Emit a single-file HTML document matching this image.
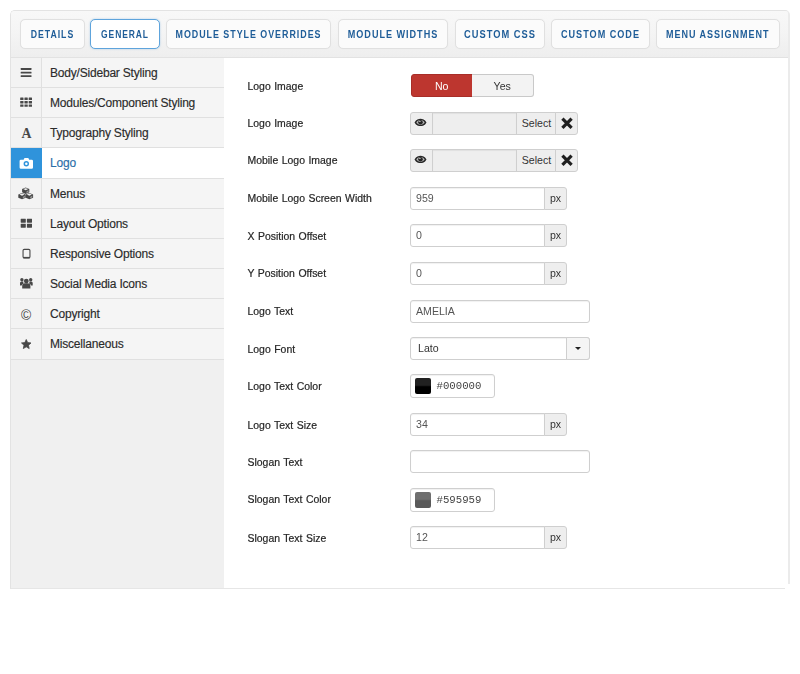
<!DOCTYPE html>
<html lang="en">
<head>
<meta charset="utf-8">
<title>Template Settings</title>
<style>
*{box-sizing:border-box;}
html,body{margin:0;padding:0;background:#fff;}
body{width:800px;height:674px;overflow:hidden;font-family:"Liberation Sans",sans-serif;font-size:12px;color:#333;position:relative;}
.panel{position:absolute;left:10px;top:10px;width:780px;height:579px;border:1px solid #e3e3e3;border-right:2px solid #ebebeb;border-bottom-color:#e6e6e6;border-radius:5px 5px 0 0;background:#fff;overflow:hidden;filter:blur(0.4px);}
.tabs{position:absolute;left:0;top:0;width:778px;height:47px;background:#f4f4f4;background-image:linear-gradient(to bottom,#f8f8f8 0,#f5f5f5 40%,#eeeeee 100%);border-bottom:1px solid #e2e2e2;margin:0;padding:0;list-style:none;}
.tabs li{position:absolute;top:8px;height:30px;border:1px solid #e0e0e0;box-shadow:0 0 1px rgba(0,0,0,.06);border-radius:5px;background:#fbfbfb;color:#1f5d98;font-weight:bold;font-size:11px;text-align:center;line-height:28px;white-space:nowrap;}
.tabs li span{display:block;letter-spacing:1.2px;transform:scaleX(0.795);transform-origin:50% 50%;margin:0 -30px;}
.tabs li.active{border-color:#5ea4dc;background:#fff;box-shadow:0 0 2px rgba(94,164,220,.5);}
.side{position:absolute;left:0;top:47px;width:213px;height:531px;background:#f0f0f0;margin:0;padding:0;list-style:none;}
.side li{position:relative;height:30.16px;border-bottom:1px solid #e0e0e0;background:#f5f5f5;line-height:30px;font-size:12px;letter-spacing:-0.2px;color:#2b2b2b;-webkit-text-stroke:0.15px currentColor;padding-left:39px;white-space:nowrap;}
.side li .ic{position:absolute;left:0;top:0;width:31px;height:100%;border-right:1px solid #e0e0e0;background:#f3f3f3;display:block;}
.side li .ic svg{position:absolute;left:0;top:-0.7px;width:31px;height:30px;}
.side li.active{background:#fff;color:#2b6fa8;}
.side li.active .ic{background:#2f93db;border-right-color:#2f93db;}
.content{position:absolute;left:213px;top:47px;width:565px;height:531px;background:#fff;}
.row{position:absolute;left:23px;height:23px;width:500px;}
.row label{position:absolute;left:0.5px;top:0;line-height:23.5px;font-size:10.45px;word-spacing:0.6px;color:#262626;-webkit-text-stroke:0.2px #262626;}
.ctl{position:absolute;left:163px;top:0;height:23px;}
.inp{position:absolute;left:0;top:0;height:23px;border:1px solid #cfcfcf;border-radius:3px;background:#fff;font-size:10.6px;color:#555;line-height:21px;padding-left:5px;box-shadow:inset 0 1px 1px rgba(0,0,0,.06);white-space:nowrap;}
.inp.dis{background:#eee;}
.addon{position:absolute;top:0;height:23px;padding-left:1px;border:1px solid #cfcfcf;background:#eee;font-size:10.6px;color:#333;line-height:21px;text-align:center;}
.addon svg{position:absolute;left:-1px;top:-0.6px;width:23px;height:22px;}
.tog{position:absolute;top:0;height:23px;font-size:10.6px;line-height:22px;text-align:center;}
.tog.no{left:1px;width:61.5px;background:#bd362f;color:#fff;border:1px solid #a82e28;border-radius:3px 0 0 3px;}
.tog.yes{left:62px;width:61.5px;background:#f3f3f3;color:#333;border:1px solid #c9c9c9;border-left:0;border-radius:0 3px 3px 0;}
.sw{position:absolute;left:3.5px;top:2.8px;width:16.5px;height:16.5px;border-radius:2px;display:block;background-image:linear-gradient(to bottom,rgba(255,255,255,.13) 0,rgba(255,255,255,.13) 45%,rgba(255,255,255,0) 55%);}
.caret{position:absolute;left:8px;top:9px;width:0;height:0;border-left:3.5px solid transparent;border-right:3.5px solid transparent;border-top:3.5px solid #222;}
</style>
</head>
<body>
<div class="panel">
  <ul class="tabs">
    <li style="left:9px;width:65px;"><span style="transform:scaleX(0.793)">DETAILS</span></li>
    <li class="active" style="left:79px;width:70px;"><span style="transform:scaleX(0.771)">GENERAL</span></li>
    <li style="left:155px;width:165px;"><span style="transform:scaleX(0.809)">MODULE STYLE OVERRIDES</span></li>
    <li style="left:327px;width:110px;"><span style="transform:scaleX(0.825)">MODULE WIDTHS</span></li>
    <li style="left:444px;width:90px;"><span style="transform:scaleX(0.846)">CUSTOM CSS</span></li>
    <li style="left:540px;width:99px;"><span style="transform:scaleX(0.827)">CUSTOM CODE</span></li>
    <li style="left:645px;width:123.500px;"><span style="transform:scaleX(0.819)">MENU ASSIGNMENT</span></li>
  </ul>
  <ul class="side">
    <li><span class="ic"><svg viewBox="0 0 31 30" aria-hidden="true"><rect x="9.7" y="11.1" width="10.8" height="1.9" rx="0.4" fill="#484848"/><rect x="9.7" y="14.7" width="10.8" height="1.9" rx="0.4" fill="#484848"/><rect x="9.7" y="18.2" width="10.8" height="1.9" rx="0.4" fill="#484848"/></svg></span>Body/Sidebar Styling</li>
    <li><span class="ic"><svg viewBox="0 0 31 30" aria-hidden="true"><rect x="9.20" y="10.60" width="3.3" height="2.4" rx="0.3" fill="#484848"/><rect x="13.45" y="10.60" width="3.3" height="2.4" rx="0.3" fill="#484848"/><rect x="17.70" y="10.60" width="3.3" height="2.4" rx="0.3" fill="#484848"/><rect x="9.20" y="14.00" width="3.3" height="2.4" rx="0.3" fill="#484848"/><rect x="13.45" y="14.00" width="3.3" height="2.4" rx="0.3" fill="#484848"/><rect x="17.70" y="14.00" width="3.3" height="2.4" rx="0.3" fill="#484848"/><rect x="9.20" y="17.40" width="3.3" height="2.4" rx="0.3" fill="#484848"/><rect x="13.45" y="17.40" width="3.3" height="2.4" rx="0.3" fill="#484848"/><rect x="17.70" y="17.40" width="3.3" height="2.4" rx="0.3" fill="#484848"/></svg></span>Modules/Component Styling</li>
    <li><span class="ic"><svg viewBox="0 0 31 30" aria-hidden="true"><text x="15.3" y="20.4" text-anchor="middle" font-family="Liberation Serif, serif" font-weight="bold" font-size="13.8" fill="#484848">A</text></svg></span>Typography Styling</li>
    <li class="active"><span class="ic"><svg viewBox="0 0 31 30" aria-hidden="true"><path d="M12.6 11.7l0.900-1.600h3.800l0.900 1.600h2.500a1.300 1.300 0 0 1 1.300 1.300v6.400a1.300 1.300 0 0 1-1.300 1.300h-10.800a1.300 1.300 0 0 1-1.300-1.300v-6.400a1.300 1.300 0 0 1 1.300-1.300z" fill="#fff"/><circle cx="15.3" cy="15.800" r="2.700" fill="#2f93db"/><circle cx="15.300" cy="15.800" r="1.250" fill="#fff"/></svg></span>Logo</li>
    <li><span class="ic"><svg viewBox="0 0 31 30" aria-hidden="true"><polygon points="14.70,9.50 18.30,11.10 18.30,14.30 14.70,15.90 11.10,14.30 11.10,11.10" fill="#484848"/><polygon points="14.70,10.13 17.13,11.10 14.70,12.35 12.27,11.10" fill="#f0f0f0"/><polygon points="15.50,13.60 17.50,12.10 17.50,14.00 15.50,14.90" fill="#9a9a9a"/><polygon points="11.00,14.90 14.70,16.50 14.70,19.70 11.00,21.30 7.30,19.70 7.30,16.50" fill="#484848"/><polygon points="11.00,15.53 13.53,16.50 11.00,17.75 8.47,16.50" fill="#f0f0f0"/><polygon points="11.80,19.00 13.90,17.50 13.90,19.40 11.80,20.30" fill="#9a9a9a"/><polygon points="18.40,14.90 22.10,16.50 22.10,19.70 18.40,21.30 14.70,19.70 14.70,16.50" fill="#484848"/><polygon points="18.40,15.53 20.93,16.50 18.40,17.75 15.87,16.50" fill="#f0f0f0"/><polygon points="19.20,19.00 21.30,17.50 21.30,19.40 19.20,20.30" fill="#9a9a9a"/></svg></span>Menus</li>
    <li><span class="ic"><svg viewBox="0 0 31 30" aria-hidden="true"><rect x="9.70" y="10.70" width="5.1" height="4" rx="0.4" fill="#484848"/><rect x="15.90" y="10.70" width="5.1" height="4" rx="0.4" fill="#484848"/><rect x="9.70" y="15.70" width="5.1" height="4" rx="0.4" fill="#484848"/><rect x="15.90" y="15.70" width="5.1" height="4" rx="0.4" fill="#484848"/></svg></span>Layout Options</li>
    <li><span class="ic"><svg viewBox="0 0 31 30" aria-hidden="true"><rect x="12.050" y="11.350" width="6.900" height="8.700" rx="1.200" fill="none" stroke="#484848" stroke-width="1.100"/><rect x="12.050" y="18.900" width="6.900" height="1.400" fill="#484848"/></svg></span>Responsive Options</li>
    <li><span class="ic"><svg viewBox="0 0 31 30" aria-hidden="true"><circle cx="15.3" cy="13.1" r="2.400" fill="#484848"/><path d="M11.2 20.6v-2.600a2.700 2.700 0 0 1 2.700-2.700h2.800a2.700 2.700 0 0 1 2.700 2.700v2.600z" fill="#484848"/><circle cx="10.900" cy="11.700" r="1.700" fill="#484848"/><circle cx="19.700" cy="11.700" r="1.700" fill="#484848"/><path d="M9 17.500v-2.400a1.500 1.500 0 0 1 1.500-1.500h1.800a3.500 3.500 0 0 0 0.300 2a3.300 3.300 0 0 0-2 1.900z" fill="#484848"/><path d="M21.700 17.500v-2.400a1.500 1.500 0 0 0-1.500-1.500h-1.800a3.500 3.500 0 0 1-0.300 2a3.300 3.300 0 0 1 2 1.900z" fill="#484848"/></svg></span>Social Media Icons</li>
    <li><span class="ic"><svg viewBox="0 0 31 30" aria-hidden="true"><text x="15.100" y="20.800" text-anchor="middle" font-family="Liberation Sans, sans-serif" font-size="13.8" fill="#444">©</text></svg></span>Copyright</li>
    <li><span class="ic"><svg viewBox="0 0 31 30" aria-hidden="true"><polygon points="15.25,10.50 16.63,13.60 20.01,13.95 17.48,16.23 18.19,19.55 15.25,17.85 12.31,19.55 13.02,16.23 10.49,13.95 13.87,13.60" fill="#484848" stroke="#484848" stroke-width="0.800" stroke-linejoin="round"/></svg></span>Miscellaneous</li>
  </ul>
  <div class="content">
    <div class="row" style="top:16px;"><label style="top:1px;">Logo Image</label><div class="ctl"><span class="tog no">No</span><span class="tog yes">Yes</span></div></div>
    <div class="row" style="top:54px;"><label>Logo Image</label><div class="ctl"><span class="addon" style="left:0;width:23px;border-radius:3px 0 0 3px;"><svg class="eye" viewBox="0 0 23 22" aria-hidden="true"><path d="M4.500 10.400C6.300 7.300 8.600 6.700 10.500 6.700C12.400 6.700 14.700 7.300 16.500 10.400C14.700 13.500 12.400 14.100 10.500 14.100C8.600 14.100 6.300 13.500 4.500 10.400z" fill="#262626"/><path d="M6.300 10.500C7.500 8.700 9 8.100 10.500 8.100C12 8.100 13.500 8.700 14.700 10.500C13.500 12.200 12 12.800 10.500 12.800C9 12.800 7.500 12.200 6.300 10.500z" fill="#b5b5b5"/><circle cx="10.500" cy="10.300" r="2.250" fill="#262626"/><circle cx="9.900" cy="9.400" r="0.700" fill="#d8d8d8"/></svg></span><span class="inp dis" style="left:22px;width:85px;border-radius:0;"></span><span class="addon" style="left:106px;width:40px;">Select</span><span class="addon" style="left:145px;width:23px;border-radius:0 3px 3px 0;"><svg class="x" viewBox="0 0 23 22" aria-hidden="true"><path d="M7.400 6.700l9.200 9.200M16.600 6.700l-9.200 9.200" stroke="#1f1f1f" stroke-width="3.200" stroke-linecap="butt"/></svg></span></div></div>
    <div class="row" style="top:91px;"><label>Mobile Logo Image</label><div class="ctl"><span class="addon" style="left:0;width:23px;border-radius:3px 0 0 3px;"><svg class="eye" viewBox="0 0 23 22" aria-hidden="true"><path d="M4.500 10.400C6.300 7.300 8.600 6.700 10.500 6.700C12.400 6.700 14.700 7.300 16.500 10.400C14.700 13.500 12.400 14.100 10.500 14.100C8.600 14.100 6.300 13.500 4.500 10.400z" fill="#262626"/><path d="M6.300 10.500C7.500 8.700 9 8.100 10.500 8.100C12 8.100 13.500 8.700 14.700 10.500C13.500 12.200 12 12.800 10.500 12.800C9 12.800 7.500 12.200 6.300 10.500z" fill="#b5b5b5"/><circle cx="10.500" cy="10.300" r="2.250" fill="#262626"/><circle cx="9.900" cy="9.400" r="0.700" fill="#d8d8d8"/></svg></span><span class="inp dis" style="left:22px;width:85px;border-radius:0;"></span><span class="addon" style="left:106px;width:40px;">Select</span><span class="addon" style="left:145px;width:23px;border-radius:0 3px 3px 0;"><svg class="x" viewBox="0 0 23 22" aria-hidden="true"><path d="M7.400 6.700l9.200 9.200M16.600 6.700l-9.200 9.200" stroke="#1f1f1f" stroke-width="3.200" stroke-linecap="butt"/></svg></span></div></div>
    <div class="row" style="top:129px;"><label>Mobile Logo Screen Width</label><div class="ctl"><span class="inp" style="width:134.5px;border-radius:3px 0 0 3px;">959</span><span class="addon" style="left:133.5px;width:23px;border-radius:0 3px 3px 0;">px</span></div></div>
    <div class="row" style="top:166px;"><label style="top:1px;">X Position Offset</label><div class="ctl"><span class="inp" style="width:134.5px;border-radius:3px 0 0 3px;">0</span><span class="addon" style="left:133.5px;width:23px;border-radius:0 3px 3px 0;">px</span></div></div>
    <div class="row" style="top:204px;"><label>Y Position Offset</label><div class="ctl"><span class="inp" style="width:134.5px;border-radius:3px 0 0 3px;">0</span><span class="addon" style="left:133.5px;width:23px;border-radius:0 3px 3px 0;">px</span></div></div>
    <div class="row" style="top:242px;"><label>Logo Text</label><div class="ctl"><span class="inp" style="width:180px;">AMELIA</span></div></div>
    <div class="row" style="top:279px;"><label style="top:1px;">Logo Font</label><div class="ctl"><span class="inp" style="width:180px;padding-left:7px;color:#333;">Lato</span><span class="addon" style="left:156px;width:24px;border-radius:0 3px 3px 0;background:#f5f5f5;"><i class="caret"></i></span></div></div>
    <div class="row" style="top:316px;"><label style="top:1px;">Logo Text Color</label><div class="ctl"><span class="inp" style="width:84.5px;height:24px;line-height:22.5px;padding-left:25.500px;color:#444;font-family:'Liberation Mono',monospace;font-size:10.700px;"><i class="sw" style="background-color:#000"></i>#000000</span></div></div>
    <div class="row" style="top:355px;"><label style="top:1px;">Logo Text Size</label><div class="ctl"><span class="inp" style="width:134.5px;border-radius:3px 0 0 3px;">34</span><span class="addon" style="left:133.5px;width:23px;border-radius:0 3px 3px 0;">px</span></div></div>
    <div class="row" style="top:392px;"><label style="top:1px;">Slogan Text</label><div class="ctl"><span class="inp" style="width:180px;"></span></div></div>
    <div class="row" style="top:430px;"><label>Slogan Text Color</label><div class="ctl"><span class="inp" style="width:84.5px;height:24px;line-height:22.5px;padding-left:25.500px;color:#444;font-family:'Liberation Mono',monospace;font-size:10.700px;"><i class="sw" style="background-color:#595959"></i>#595959</span></div></div>
    <div class="row" style="top:468px;"><label style="top:1px;">Slogan Text Size</label><div class="ctl"><span class="inp" style="width:134.5px;border-radius:3px 0 0 3px;">12</span><span class="addon" style="left:133.5px;width:23px;border-radius:0 3px 3px 0;">px</span></div></div>
  </div>
</div>
<div style="position:absolute;left:785px;top:584px;width:6px;height:6px;background:#fff;"></div>
</body>
</html>
